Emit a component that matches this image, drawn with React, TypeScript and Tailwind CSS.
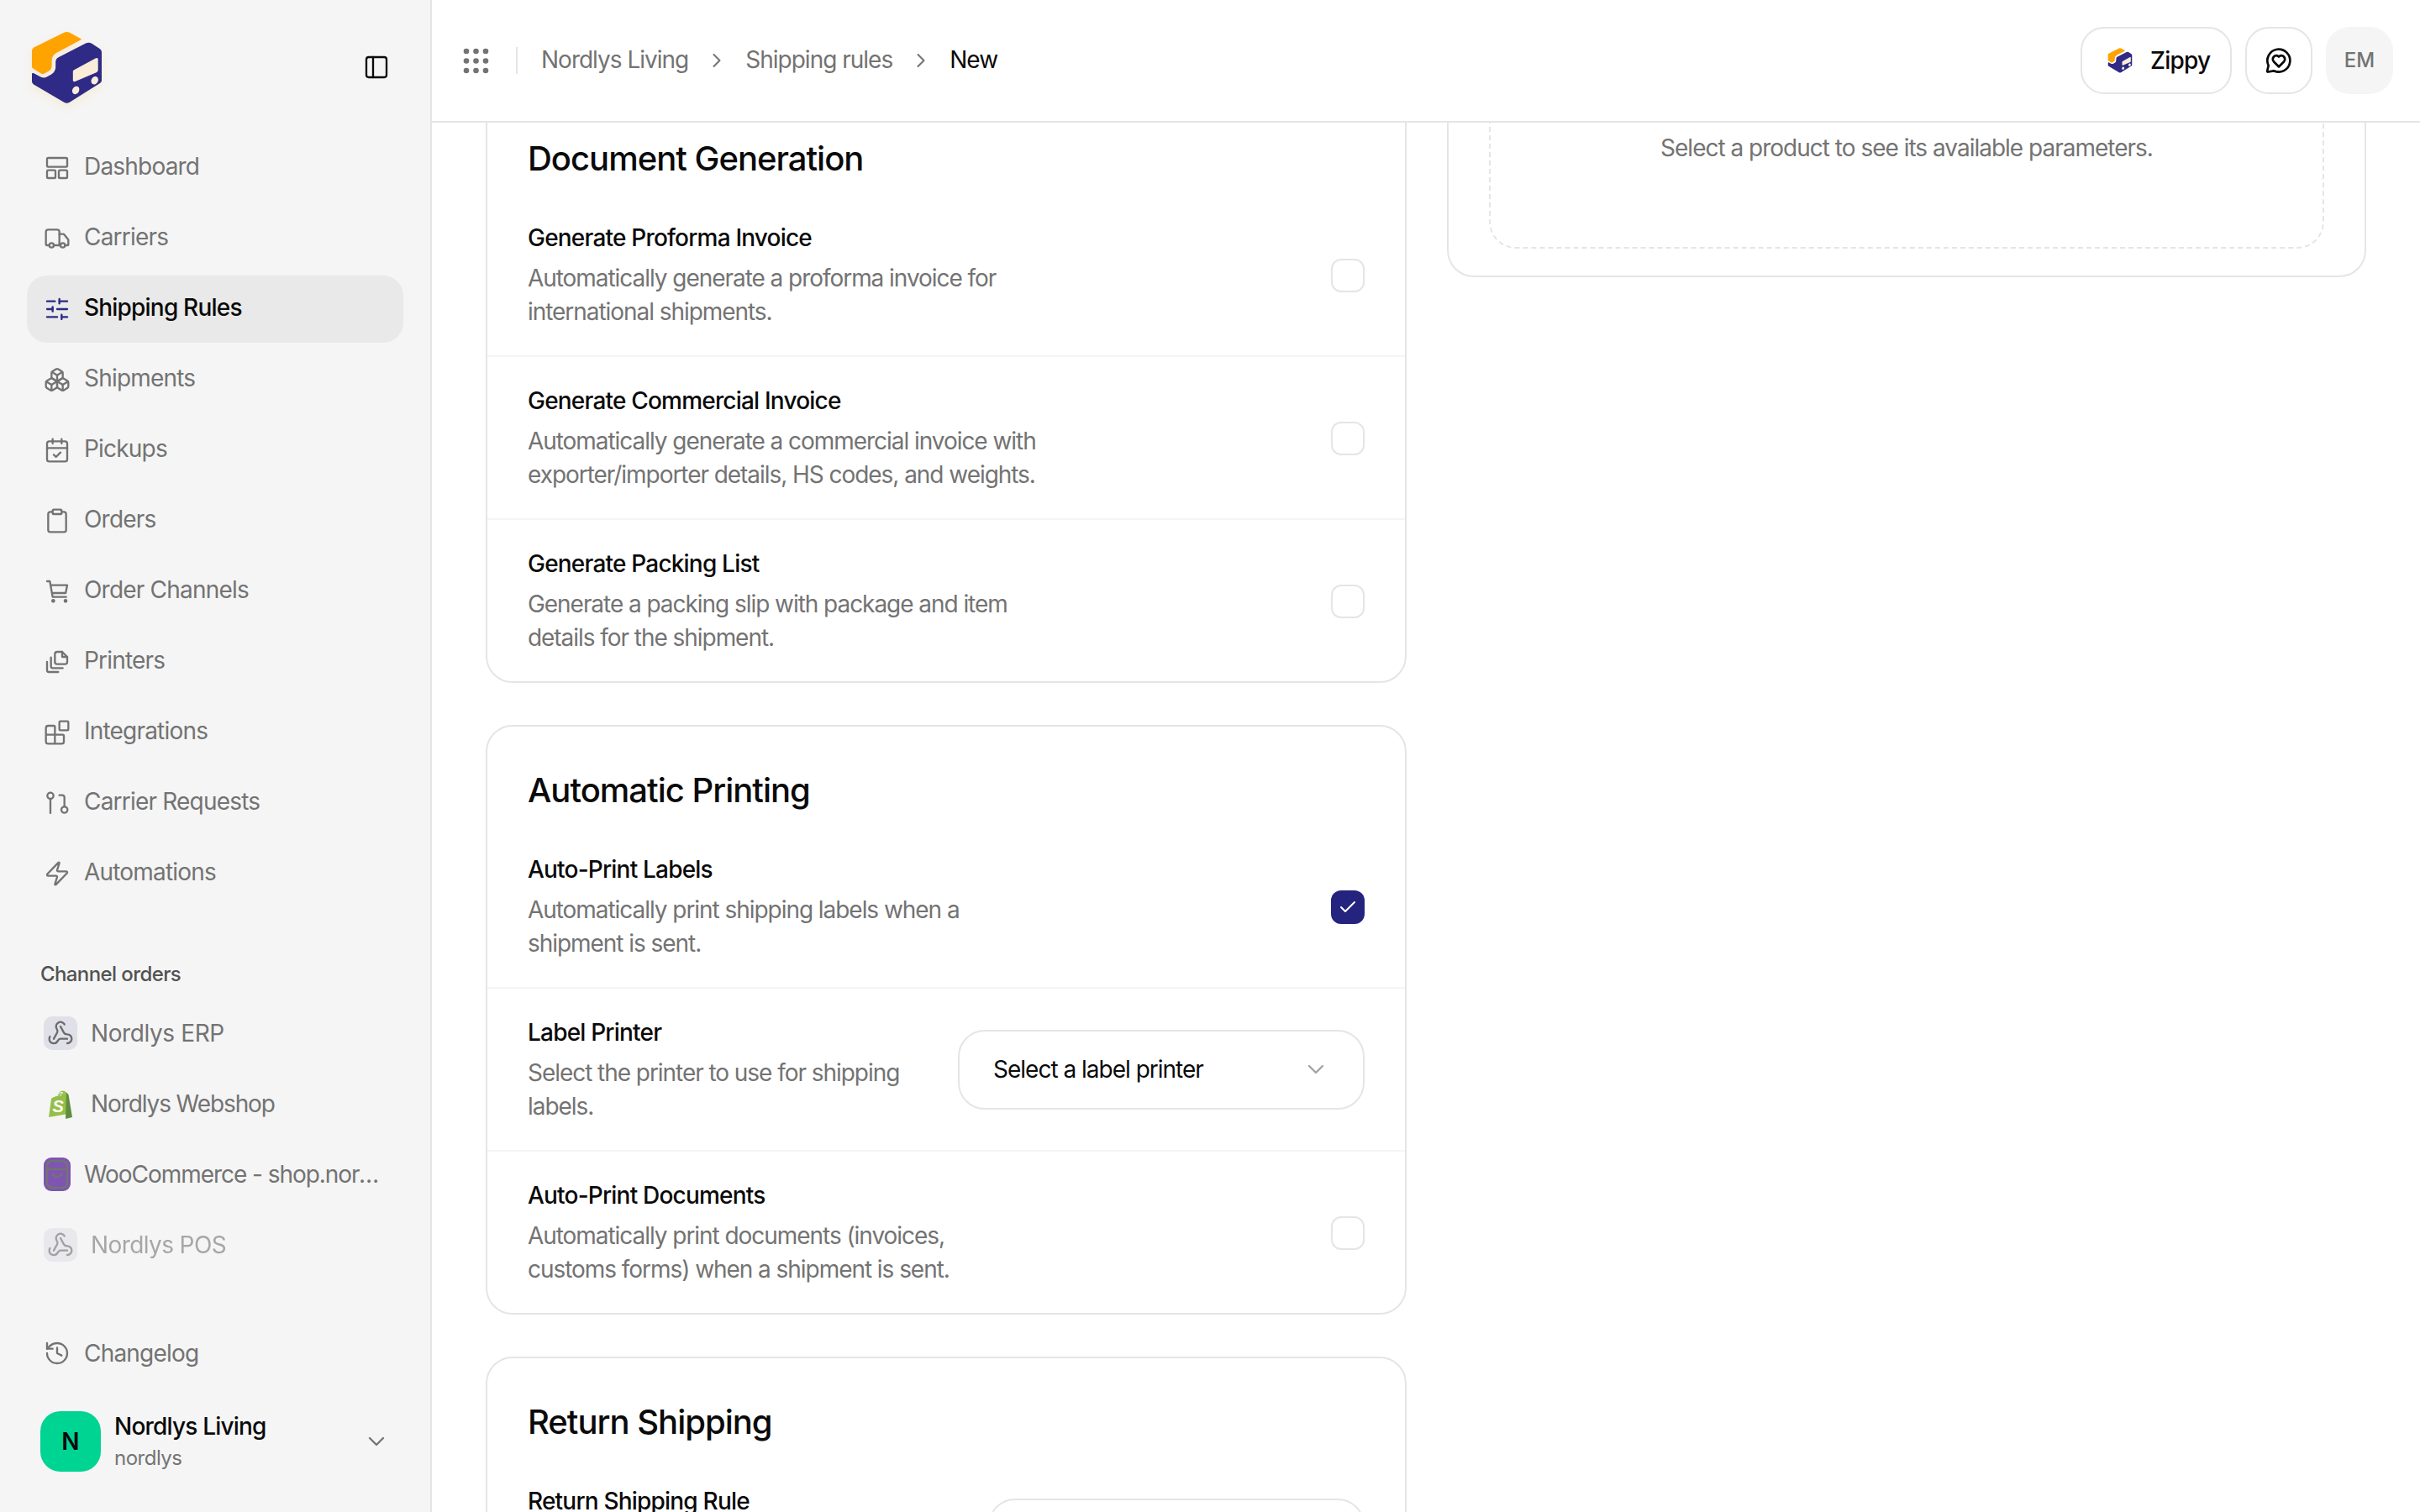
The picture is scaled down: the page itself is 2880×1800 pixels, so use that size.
import React from 'react';
import {
  Truck, SlidersHorizontal, Boxes, CalendarCheck, Clipboard, Blocks, Zap,
  Webhook, History, ChevronDown, ChevronRight, PanelLeft, Check,
} from 'lucide-react';

function LayoutIcon({ className }: { className?: string }) {
  return (
    <svg viewBox="0 0 24 24" fill="none" stroke="currentColor" strokeWidth="1.75" className={className}>
      <rect x="3" y="3" width="18" height="8" rx="1" />
      <rect x="3" y="14" width="7.5" height="7" rx="1" />
      <rect x="13.5" y="14" width="7.5" height="7" rx="1" />
    </svg>
  );
}

function RequestIcon({ className }: { className?: string }) {
  return (
    <svg viewBox="0 0 24 24" fill="none" stroke="currentColor" strokeWidth="1.75" strokeLinecap="round" className={className}>
      <circle cx="6" cy="5.5" r="2.75" />
      <path d="M6 8.5V21" />
      <circle cx="18.5" cy="18" r="2.75" />
      <path d="M18.5 15V7a2 2 0 0 0-2-2H14" />
    </svg>
  );
}

function CartIcon({ className }: { className?: string }) {
  return (
    <svg viewBox="0 0 24 24" fill="none" stroke="currentColor" strokeWidth="1.75" strokeLinecap="round" strokeLinejoin="round" className={className}>
      <path d="M3 3h2.5L8 17h12" />
      <path d="M6.2 6.5H21l-1.4 7H7.5" />
      <circle cx="8.5" cy="20.5" r="0.9" fill="currentColor" />
      <circle cx="19.5" cy="20.5" r="0.9" fill="currentColor" />
    </svg>
  );
}

function PagesIcon({ className }: { className?: string }) {
  return (
    <svg viewBox="0 0 24 24" fill="none" stroke="currentColor" strokeWidth="1.75" strokeLinecap="round" strokeLinejoin="round" className={className}>
      <path d="M10 12V5a2 2 0 0 1 2-2h4.5L21 7.5V12a2 2 0 0 1-2 2h-7a2 2 0 0 1-2-2Z" />
      <path d="M16.5 3v4.5H21" />
      <path d="M6.5 8v8a1.5 1.5 0 0 0 1.5 1.5h9" />
      <path d="M3 12v7.5A1.5 1.5 0 0 0 4.5 21H13" />
    </svg>
  );
}

function ChatHeartIcon({ className }: { className?: string }) {
  return (
    <svg viewBox="0 0 24 24" fill="none" stroke="currentColor" strokeWidth="1.8" strokeLinejoin="round" strokeLinecap="round" className={className}>
      <path d="M8 20.2A9 9 0 1 0 3.8 16L2.8 20.2Q2.6 21.2 3.6 21Z" />
      <path d="M12 17l-4.1-4.2a2.8 2.8 0 0 1 3.9-4l.2.2.2-.2a2.8 2.8 0 0 1 3.9 4Z" />
    </svg>
  );
}

function Logo({ className }: { className?: string }) {
  return (
    <svg viewBox="100 100 280 280" className={className}>
      <path d="M115 180Q115 172 122 168L230 114Q240 110 250 114L290 136Q294 139 290 141L205 186Q186 196 186 216V234Q186 246 176 252L160 261Q154 264 148 261L120 244Q115 241 115 236Z" fill="#ffa300" />
      <path d="M115 264Q115 257 122 260L146 273Q158 279 170 272L186 263Q200 254 200 238V220Q200 208 210 203L308 153Q318 148 328 153L358 172Q365 176 365 184V286Q365 292 359 296L250 364Q240 370 230 364L121 300Q115 296 115 290Z" fill="#2e2a86" />
      <path d="M262 256Q260 252 266 248L344 206Q352 203 352 210V248Q352 254 346 257L270 290Q262 292 262 286Z" fill="#f9ecd9" />
      <ellipse cx="272" cy="321" rx="12" ry="15" transform="rotate(30 272 321)" fill="#f9ecd9" />
      <ellipse cx="340" cy="286" rx="12" ry="15" transform="rotate(30 340 286)" fill="#f9ecd9" />
    </svg>
  );
}

function ShopifyIcon() {
  return (
    <svg viewBox="0 0 40 40" className="w-10 h-10 shrink-0">
      <path d="M10 13 16 10.5Q19 4 23 4.5L25 5 27 6.5 29 32 6 36 9 14Z" fill="#95bf47" />
      <path d="M27 6.5 29.5 9 34 36 26 38Z" fill="#5e8e3e" />
      <path d="M16 11Q19 5 23 7Q21 7 19.5 11" fill="none" stroke="#f5f5f5" strokeWidth="1" />
      <text x="10.5" y="30" fontSize="20" fontWeight="700" fontStyle="italic" fill="#fff" fontFamily="Liberation Sans, sans-serif">S</text>
    </svg>
  );
}

function WooIcon() {
  return (
    <svg viewBox="0 0 32 40" className="w-8 h-10 shrink-0">
      <rect width="32" height="40" rx="9" fill="#7f54b3" />
      <g fill="none" stroke="#737373" strokeWidth="2.6" strokeLinecap="round">
        <rect x="4" y="4" width="24" height="32" rx="6" />
        <path d="M4 14H28" />
        <path d="M10.5 19.5Q16 27 21.5 19.5" />
      </g>
    </svg>
  );
}

const navItems = [
  { label: 'Dashboard', icon: LayoutIcon },
  { label: 'Carriers', icon: Truck },
  { label: 'Shipping Rules', icon: SlidersHorizontal, active: true },
  { label: 'Shipments', icon: Boxes },
  { label: 'Pickups', icon: CalendarCheck },
  { label: 'Orders', icon: Clipboard },
  { label: 'Order Channels', icon: CartIcon },
  { label: 'Printers', icon: PagesIcon },
  { label: 'Integrations', icon: Blocks },
  { label: 'Carrier Requests', icon: RequestIcon },
  { label: 'Automations', icon: Zap },
];

function WebhookBox() {
  return (
    <div className="w-10 h-10 shrink-0 rounded-[10px] bg-[#e0e0e8] flex items-center justify-center">
      <Webhook className="w-8 h-8 text-[#6b6b6b]" strokeWidth={1.75} />
    </div>
  );
}

function Sidebar() {
  return (
    <aside className="w-[514px] shrink-0 h-full flex flex-col bg-[#f5f5f5] border-r-2 border-[#e5e5e5]">
      <div className="h-40 shrink-0 flex items-center justify-between pl-[33px] pr-12">
        <Logo className="w-[93px] h-[93px] drop-shadow-[0_4px_6px_rgba(255,163,0,0.12)]" />
        <PanelLeft className="w-8 h-8 text-[#0a0a0a]" strokeWidth={1.75} />
      </div>
      <nav className="flex flex-col gap-1 px-8">
        {navItems.map(({ label, icon: Icon, active }) => (
          <a
            key={label}
            className={`h-20 flex items-center gap-4 pl-5 rounded-3xl text-[28px] tracking-[-0.8px] ${active ? 'bg-[#e9e9e9] text-[#0a0a0a] font-medium' : 'text-[#737373]'}`}
          >
            <Icon className={`w-8 h-8 shrink-0 ${active ? 'text-[#2a2a86]' : ''}`} strokeWidth={1.75} />
            <span className="pb-1">{label}</span>
          </a>
        ))}
      </nav>
      <div className="mt-[64px] pl-12 text-[24px] leading-8 font-medium text-[#525252] tracking-[-0.6px]">Channel orders</div>
      <div className="mt-[14px] flex flex-col gap-1 px-8">
        <div className="h-20 flex items-center gap-4 pl-5 text-[28px] text-[#737373] tracking-[-0.4px]">
          <WebhookBox />
          Nordlys ERP
        </div>
        <div className="h-20 flex items-center gap-4 pl-5 text-[28px] text-[#737373] tracking-[-1.1px]">
          <ShopifyIcon />
          Nordlys Webshop
        </div>
        <div className="h-20 flex items-center gap-4 pl-5 pr-5 text-[28px] text-[#737373] tracking-[-1.05px]">
          <WooIcon />
          <span className="truncate">WooCommerce - shop.nordlysliving.no</span>
        </div>
        <div className="h-20 flex items-center gap-4 pl-5 text-[28px] text-[#737373] tracking-[-0.6px] opacity-60">
          <WebhookBox />
          Nordlys POS
        </div>
      </div>
      <div className="mt-auto px-8">
        <a className="h-20 flex items-center gap-4 pl-5 text-[28px] text-[#737373] tracking-[-0.8px]">
          <History className="w-8 h-8 shrink-0" strokeWidth={1.75} />
          Changelog
        </a>
      </div>
      <div className="mt-[29px] mb-12 pl-12 pr-12 flex items-center">
        <div className="w-[72px] h-[72px] rounded-3xl bg-[#00d492] flex items-center justify-center text-[28px] font-semibold text-[#0a0a0a]">N</div>
        <div className="ml-4 flex-1 flex flex-col gap-1">
          <span className="text-[28px] leading-9 font-medium text-[#0a0a0a] tracking-[-0.8px]">Nordlys Living</span>
          <span className="text-[24px] leading-8 text-[#737373] tracking-[-0.5px]">nordlys</span>
        </div>
        <ChevronDown className="w-8 h-8 text-[#737373]" strokeWidth={1.75} />
      </div>
    </aside>
  );
}

function Topbar() {
  return (
    <header className="h-[146px] shrink-0 bg-white border-b-2 border-[#e5e5e5] flex items-center justify-between pl-9 pr-8">
      <div className="flex items-center">
        <svg viewBox="0 0 32 32" className="w-8 h-8 text-[#737373]" fill="currentColor">
          {[5, 16.5, 28].map((y) => [5, 16.5, 28].map((x) => <circle key={`${x}-${y}`} cx={x} cy={y} r="3.3" />))}
        </svg>
        <div className="w-0.5 h-8 bg-[#e5e5e5] ml-8 mr-[28px]" />
        <div className="flex items-center gap-5 text-[28px] text-[#737373] tracking-[-1px]">
          <span className="pb-0.5">Nordlys Living</span>
          <ChevronRight className="w-7 h-7" strokeWidth={1.75} />
          <span className="pb-0.5">Shipping rules</span>
          <ChevronRight className="w-7 h-7" strokeWidth={1.75} />
          <span className="pb-0.5 text-[#0a0a0a]">New</span>
        </div>
      </div>
      <div className="flex items-center gap-4">
        <button className="h-20 w-[180px] flex items-center gap-5 pl-[29px] rounded-[28px] border-2 border-[#e5e5e5] text-[28px] font-medium text-[#0a0a0a] tracking-[-0.8px]">
          <Logo className="w-8 h-8" />
          Zippy
        </button>
        <button className="w-20 h-20 flex items-center justify-center rounded-[28px] border-2 border-[#e5e5e5]">
          <ChatHeartIcon className="w-9 h-9 text-[#0a0a0a]" />
        </button>
        <div className="w-20 h-20 flex items-center justify-center rounded-[28px] bg-[#f5f5f5] text-[24px] font-medium text-[#737373]">EM</div>
      </div>
    </header>
  );
}

type Row = { title: string; desc: string; checked?: boolean; select?: string; selectWidth?: string };

function Checkbox({ checked }: { checked?: boolean }) {
  if (checked) {
    return (
      <div className="w-10 h-10 mt-0.5 shrink-0 rounded-xl bg-[#24247f] flex items-center justify-center">
        <Check className="w-6 h-6 text-white" strokeWidth={2} />
      </div>
    );
  }
  return <div className="w-10 h-10 mt-0.5 shrink-0 rounded-xl border-2 border-[#e5e5e5]" />;
}

function SettingRow({ row }: { row: Row }) {
  return (
    <div className="flex items-center justify-between px-12 pt-8 pb-8 border-b-2 border-[#f5f5f5] last:border-b-0">
      <div>
        <div className="text-[28px] leading-10 font-medium text-[#0a0a0a] tracking-[-0.8px]">{row.title}</div>
        <p className="mt-2 text-[28px] leading-10 text-[#737373] tracking-[-1.05px] whitespace-pre-line">{row.desc}</p>
      </div>
      {row.select ? (
        <div className={`h-[95px] shrink-0 flex items-center justify-between pl-10 pr-10 rounded-[32px] border-2 border-[#e5e5e5] text-[28px] text-[#0a0a0a] tracking-[-1px] ${row.selectWidth}`}>
          {row.select}
          <ChevronDown className="w-8 h-8 text-[#a3a3a3]" strokeWidth={1.75} />
        </div>
      ) : (
        <Checkbox checked={row.checked} />
      )}
    </div>
  );
}

function Section({ title, rows }: { title: string; rows: Row[] }) {
  return (
    <section className="rounded-[32px] border-2 border-[#e5e5e5] bg-white">
      <h3 className="pt-12 pb-[14px] px-12 text-[40px] leading-[56px] font-medium text-[#0a0a0a] tracking-[-1px]">{title}</h3>
      {rows.map((r) => <SettingRow key={r.title} row={r} />)}
    </section>
  );
}

const documentRows: Row[] = [
  { title: 'Generate Proforma Invoice', desc: 'Automatically generate a proforma invoice for\ninternational shipments.' },
  { title: 'Generate Commercial Invoice', desc: 'Automatically generate a commercial invoice with\nexporter/importer details, HS codes, and weights.' },
  { title: 'Generate Packing List', desc: 'Generate a packing slip with package and item\ndetails for the shipment.' },
];

const printingRows: Row[] = [
  { title: 'Auto-Print Labels', desc: 'Automatically print shipping labels when a\nshipment is sent.', checked: true },
  { title: 'Label Printer', desc: 'Select the printer to use for shipping\nlabels.', select: 'Select a label printer', selectWidth: 'w-[484px]' },
  { title: 'Auto-Print Documents', desc: 'Automatically print documents (invoices,\ncustoms forms) when a shipment is sent.' },
];

const returnRows: Row[] = [
  { title: 'Return Shipping Rule', desc: 'Select the rule to use for return\nshipments.', select: 'Select a rule', selectWidth: 'w-[448px]' },
];

export default function App() {
  return (
    <div className="w-[2880px] h-[1800px] flex overflow-hidden bg-white font-[Inter,sans-serif]">
      <Sidebar />
      <div className="flex-1 min-w-0 flex flex-col">
        <Topbar />
        <main className="flex-1 overflow-hidden pl-16 pr-16">
          <div className="-mt-[35px] grid grid-cols-[1096px_1fr] gap-12 items-start">
            <div className="flex flex-col gap-[50px]">
              <Section title="Document Generation" rows={documentRows} />
              <Section title="Automatic Printing" rows={printingRows} />
              <Section title="Return Shipping" rows={returnRows} />
            </div>
            <div className="rounded-[32px] border-2 border-[#e5e5e5] px-12 pb-8">
              <div className="rounded-[32px] border-2 border-dashed border-[#e5e5e5] pt-[41px] pb-[98px] text-center text-[28px] leading-10 text-[#737373] tracking-[-1px]">
                Select a product to see its available parameters.
              </div>
            </div>
          </div>
        </main>
      </div>
    </div>
  );
}
